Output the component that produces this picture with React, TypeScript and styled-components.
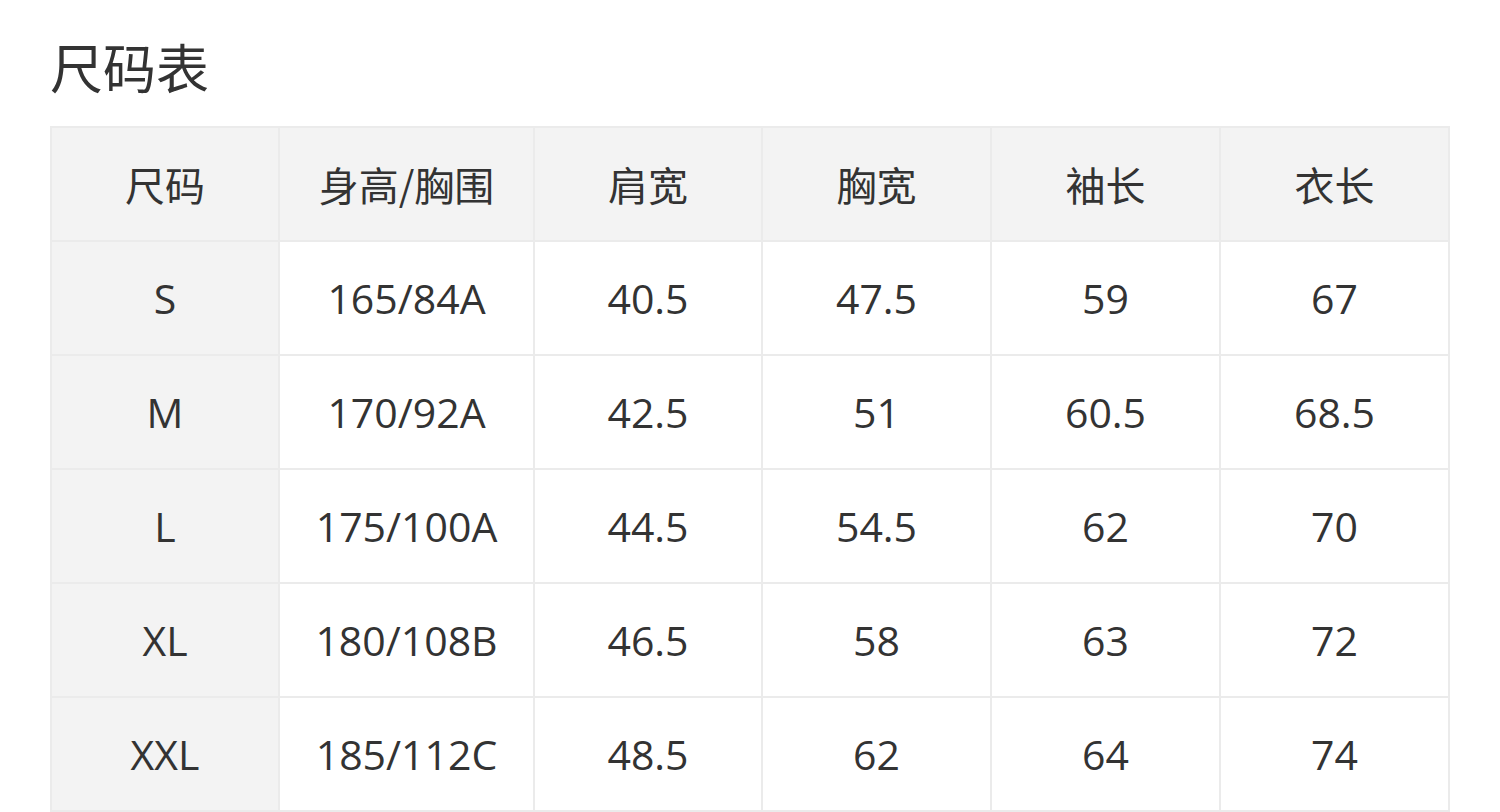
import React from "react";
import styled, { createGlobalStyle } from "styled-components";

const Global = createGlobalStyle`
  html, body { margin: 0; padding: 0; background: #ffffff; }
  body { font-family: "Open Sans", "Noto Sans CJK SC", sans-serif; color: #333333; }
`;

const Page = styled.div`
  padding: 27px 50px 0 50px;
`;

const Title = styled.h1`
  margin: 0 0 21px 0;
  font-family: "Noto Sans CJK SC", sans-serif;
  font-size: 53px;
  line-height: 78px;
  font-weight: 400;
  color: #333333;
`;

const Table = styled.table`
  border-collapse: collapse;
  table-layout: fixed;
  width: 1398px;
  border: 2px solid #ebebeb;
`;

const HeadCell = styled.th`
  background: #f3f3f3;
  border: 2px solid #ebebeb;
  height: 112px;
  padding: 0;
  font-family: "Noto Sans CJK SC", sans-serif;
  font-size: 40px;
  font-weight: 400;
  text-align: center;
  color: #333333;
`;

const Cell = styled.td<{ $shaded?: boolean }>`
  background: ${(p) => (p.$shaded ? "#f3f3f3" : "#ffffff")};
  border: 2px solid #ebebeb;
  height: 112px;
  padding: 0;
  font-size: 41px;
  text-align: center;
  color: #333333;
`;

const widths = [228, 255, 228, 229, 229, 229];
const headers = ["尺码", "身高/胸围", "肩宽", "胸宽", "袖长", "衣长"];
const rows = [
  ["S", "165/84A", "40.5", "47.5", "59", "67"],
  ["M", "170/92A", "42.5", "51", "60.5", "68.5"],
  ["L", "175/100A", "44.5", "54.5", "62", "70"],
  ["XL", "180/108B", "46.5", "58", "63", "72"],
  ["XXL", "185/112C", "48.5", "62", "64", "74"],
];

export default function App() {
  return (
    <>
      <Global />
      <Page>
        <Title>尺码表</Title>
        <Table>
          <colgroup>
            {widths.map((w, i) => (
              <col key={i} style={{ width: w }} />
            ))}
          </colgroup>
          <thead>
            <tr>
              {headers.map((h) => (
                <HeadCell key={h}>{h}</HeadCell>
              ))}
            </tr>
          </thead>
          <tbody>
            {rows.map((r) => (
              <tr key={r[0]}>
                {r.map((c, i) => (
                  <Cell key={i} $shaded={i === 0}>
                    {c}
                  </Cell>
                ))}
              </tr>
            ))}
          </tbody>
        </Table>
      </Page>
    </>
  );
}
